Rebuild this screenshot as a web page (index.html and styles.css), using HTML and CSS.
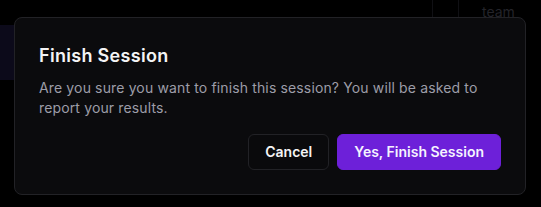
FILE: index.html
```html
<!DOCTYPE html>
<html lang="en">
<head>
<meta charset="utf-8">
<title>Finish Session</title>
<link rel="stylesheet" href="styles.css">
</head>
<body>
<div class="page">
  <div class="side"><div class="side-item"></div></div>
  <div class="main">
    <div class="topbar">
      <div class="seg seg1"></div>
      <div class="seg seg2"></div>
      <span class="team">team</span>
    </div>
  </div>
</div>
<div class="dialog" role="alertdialog">
  <div class="header">
    <h2 class="title">Finish Session</h2>
    <p class="desc">Are you sure you want to finish this session? You will be asked to report your results.</p>
  </div>
  <div class="footer">
    <button class="btn btn-outline">Cancel</button>
    <button class="btn btn-primary">Yes, Finish Session</button>
  </div>
</div>
</body>
</html>
```

FILE: styles.css
```css
* { box-sizing: border-box; }
html, body { margin: 0; padding: 0; }
body {
  background: #000;
  font-family: Inter, "Noto Sans", sans-serif;
  width: 541px;
  height: 207px;
  overflow: hidden;
  position: relative;
}
.page { display: flex; height: 207px; }
.side { width: 300px; padding-top: 25px; }
.side-item { height: 55px; background: #0c0a1a; }
.main { flex: 1; }
.topbar { display: flex; height: 17px; padding-left: 132px; }
.seg { border-left: 1px solid #101014; height: 17px; }
.seg1 { width: 26px; }
.seg2 { width: 24px; }
.team { color: #24242a; font-size: 14px; line-height: 20px; margin-top: 2px; }

.dialog {
  position: absolute;
  left: 14px;
  top: 17px;
  width: 512px;
  background: #0b0b0d;
  border: 1px solid #222226;
  border-radius: 8px;
  padding: 24px;
  display: flex;
  flex-direction: column;
  gap: 16px;
}
.header { display: flex; flex-direction: column; gap: 8px; }
.title {
  margin: 0;
  font-size: 18px;
  line-height: 28px;
  font-weight: 600;
  letter-spacing: 0.3px;
  color: #f4f4f5;
}
.desc {
  margin: 0;
  font-size: 14px;
  line-height: 20px;
  letter-spacing: 0.14px;
  color: #9d9da8;
}
.footer { display: flex; justify-content: flex-end; gap: 8px; }
.btn {
  height: 36px;
  padding: 0 16px;
  border-radius: 6px;
  font-family: Inter, "Noto Sans", sans-serif;
  font-size: 14px;
  font-weight: 600;
  line-height: 20px;
  color: #f4f4f5;
  cursor: pointer;
}
.btn-outline { background: #0a0a0c; border: 1px solid #222226; }
.btn-primary { background: #6d20d9; border: 1px solid #6d20d9; color: #f5f3ff; }
```
